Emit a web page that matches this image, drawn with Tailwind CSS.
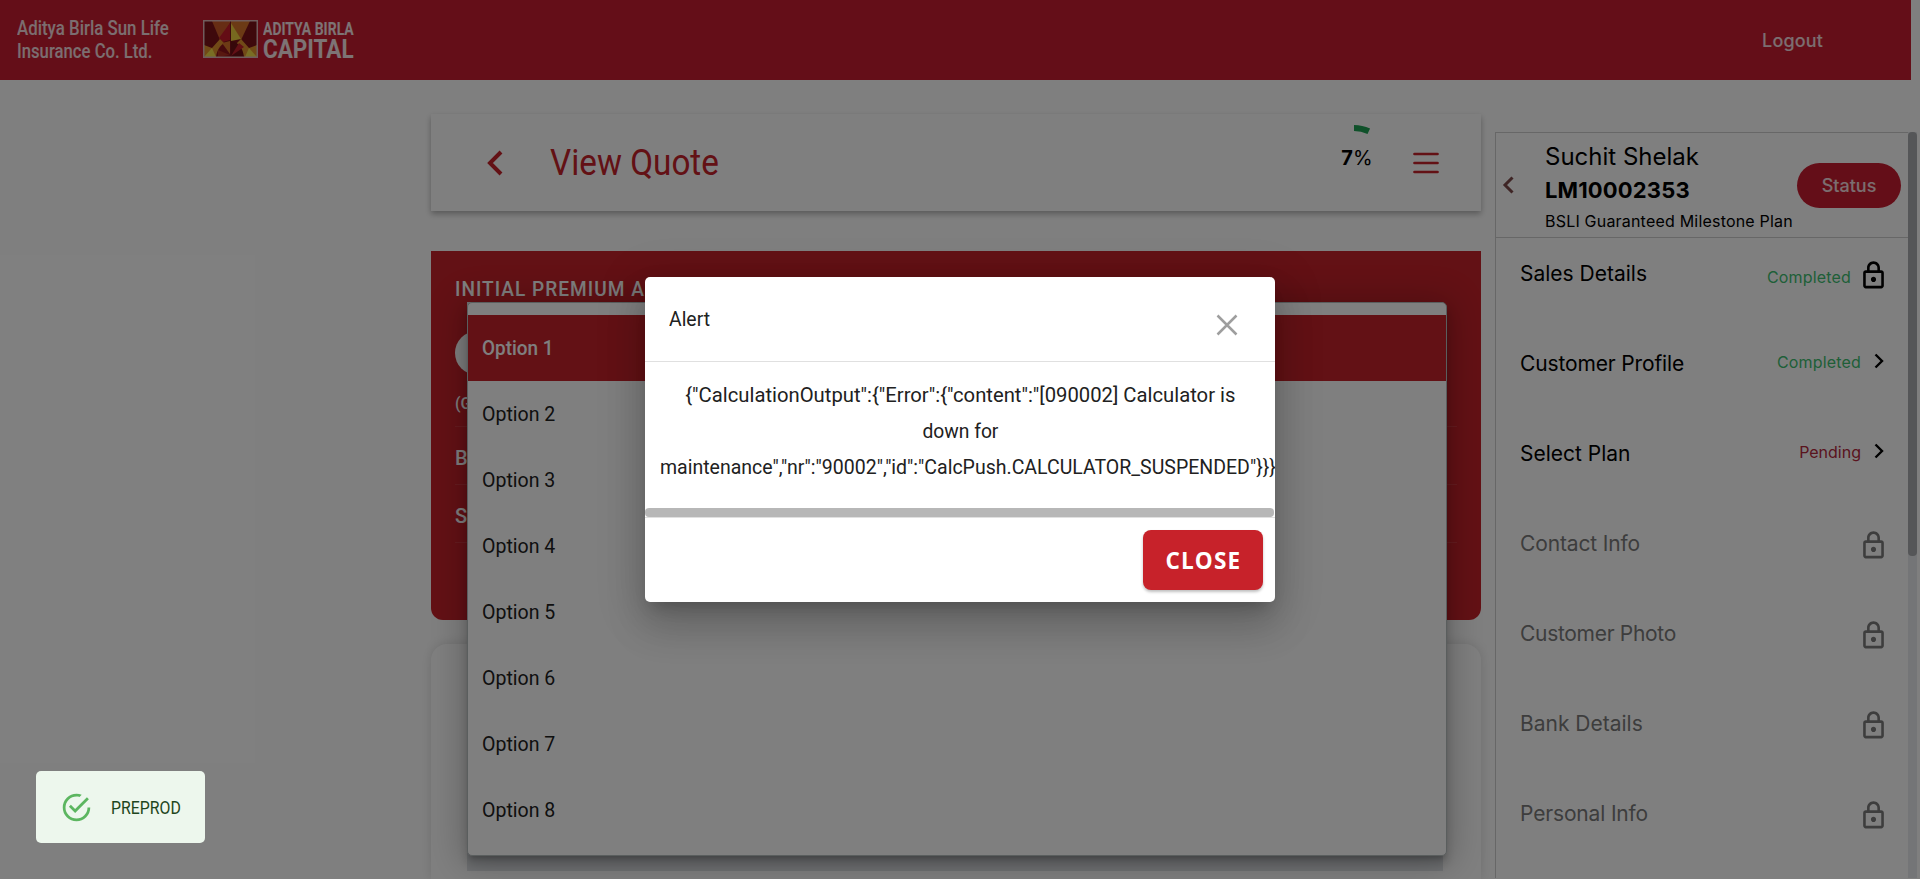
<!DOCTYPE html>
<html lang="en">
<head>
<meta charset="utf-8">
<title>View Quote</title>
<script src="https://cdn.jsdelivr.net/npm/@tailwindcss/browser@4"></script>
</head>
<body class="relative h-[879px] w-[1920px] overflow-hidden bg-white font-['Roboto',sans-serif] text-[#212121]">
<svg class="hidden">
  <symbol id="lock" viewBox="0 0 24 24"><path d="M18 8h-1V6c0-2.760-2.240-5-5-5S7 3.240 7 6v2H6c-1.100 0-2 .9-2 2v10c0 1.100.9 2 2 2h12c1.100 0 2-.9 2-2V10c0-1.100-.9-2-2-2zM9 6c0-1.660 1.340-3 3-3s3 1.340 3 3v2H9V6zm9 14H6V10h12v10zm-6-3c1.100 0 2-.9 2-2s-.9-2-2-2-2 .9-2 2 .9 2 2 2z"/></symbol>
  <symbol id="next" viewBox="0 0 10 16"><path d="M1.500 1.500L8 8l-6.500 6.500" fill="none" stroke="#000" stroke-width="2.400"/></symbol>
</svg>

<header class="flex h-20 w-[1911px] items-center bg-[#c91c30] text-white">
  <div class="ml-[17px] w-[186px] text-[20px] leading-[23.5px] font-medium text-white/85">
    <div class="w-[151px]"><div class="origin-left scale-x-[.843] whitespace-nowrap">Aditya Birla Sun Life</div></div>
    <div class="w-[134px]"><div class="origin-left scale-x-[.835] whitespace-nowrap">Insurance Co. Ltd.</div></div>
  </div>
  <svg class="mb-[2px] h-[38px] w-[55px]" viewBox="0 0 55 38">
    <rect width="55" height="38" fill="#7d1218"/>
    <path d="M9 1h18v2L17 20z" fill="#cf5a28"/><path d="M28 1h19L38 20 28 4z" fill="#d8742a"/>
    <path d="M27 3v17l-7 2-4-4z" fill="#c91a2b"/><path d="M28 3l10 16-10 2z" fill="#efd23e"/>
    <path d="M1 25l8 3 8-9 4 4-7 14H1z" fill="#e2952f"/><path d="M54 25l-8 3-8-9-4 4 7 14h13z" fill="#e2952f"/>
    <path d="M1 37l8-9 4 9zM54 37l-8-9-4 9z" fill="#f2dc48"/>
    <path d="M13 37c1-8 5-14 14-16v16z" fill="#8d141b"/><path d="M28 37V21c7 1 12 7 13 16z" fill="#6d1015"/>
    <path d="M28 36l13-9-5-4z" fill="#c5202a"/><path d="M19 23l8-2v13z" fill="#d9752a"/><path d="M15 30l12 5-12 2z" fill="#b03020"/>
    <rect x=".75" y=".75" width="53.500" height="36.500" fill="none" stroke="#e0b8b8" stroke-width="1.500"/>
  </svg>
  <div class="ml-[5px] w-[91px] whitespace-nowrap pt-px font-bold text-white/90">
    <div class="h-[17px] origin-left scale-x-[.735] text-[19px] leading-[17px]">ADITYA BIRLA</div>
    <div class="h-[24px] origin-left scale-x-[.865] text-[26px] leading-[25px]">CAPITAL</div>
  </div>
  <a class="mr-[88px] ml-auto pt-px font-['Inter',sans-serif] text-[18px] font-medium tracking-[.15px] text-white/85">Logout</a>
</header>

<main class="flex h-[799px] pl-[431px]">
  <section class="w-[1050px] shrink-0 pt-[34px]">
    <div class="flex h-[97px] items-center bg-white shadow-[0_3px_6px_rgba(0,0,0,.3)]">
      <svg class="ml-[56px] h-[26px] w-[16px]" viewBox="0 0 16 26"><path d="M14 2L3 13l11 11" fill="none" stroke="#c7222a" stroke-width="4"/></svg>
      <h1 class="ml-[47px] grow origin-left scale-x-[.924] whitespace-nowrap text-[36px] leading-[36px] text-[#c7222a]">View Quote</h1>
      <div class="relative mr-[6px] flex h-[76px] w-[76px] items-center justify-center font-['Inter',sans-serif] text-[20px]">
        <svg class="absolute inset-0" viewBox="0 0 76 76"><path d="M37 3a35 35 0 0 1 14.800 3.280" fill="none" stroke="#1fa354" stroke-width="6"/></svg>
        <span class="pb-[10px] pl-[4px] text-black"><b class="font-bold">7</b>%</span>
      </div>
      <svg class="mr-[42px] ml-[14px] h-[22px] w-[26px]" viewBox="0 0 26 22"><path d="M1.500 2h23M1.500 11h23M1.500 20h23" stroke="#c7222a" stroke-width="2.700" stroke-linecap="round"/></svg>
    </div>

    <div class="mt-[40px] h-[369px] rounded-b-[12px] bg-[#c7222a] px-6 pt-[26px] text-white">
      <div class="h-6 origin-left scale-x-[.93] whitespace-nowrap text-[20.5px] leading-6 font-medium tracking-[1.1px]">INITIAL PREMIUM AMOUNT</div>
      <div class="mt-[30px] h-[44px] w-[180px] rounded-full bg-white"></div>
      <div class="h-[52px] border-b border-white/10 pt-[16px] text-[16px] leading-[25px] font-medium">(GST)</div>
      <div class="h-[58px] border-b border-white/10 text-[20px] leading-[62px] font-medium">Base</div>
      <div class="h-[58px] border-b border-white/10 text-[20px] leading-[62px] font-medium">Sum</div>
    </div>
    <div class="mt-[24px] h-[235px] rounded-t-[16px] bg-white shadow-[0_0_12px_rgba(0,0,0,.13)]"></div>
  </section>

  <aside class="mt-[52px] ml-[14px] flex h-[746px] w-[422px] shrink-0 border-t border-l border-[#cfcfcf] bg-white font-['Inter',sans-serif] text-black">
    <div class="w-[412px]">
      <div class="flex h-[105px] items-center border-b border-[#cfcfcf]">
        <svg class="ml-[6px] h-[18px] w-[12px]" viewBox="0 0 12 18"><path d="M10.500 1.500L3 9l7.500 7.500" fill="none" stroke="#7d4a4a" stroke-width="3"/></svg>
        <div class="mt-[5px] ml-[31px] w-[252px] whitespace-nowrap">
          <div class="h-[34px] text-[24px] leading-[34px]">Suchit Shelak</div>
          <div class="h-[32px] text-[22px] leading-[33px] font-bold tracking-[.15px]">LM10002353</div>
          <div class="h-[29px] text-[16px] leading-[30px] tracking-[.2px]">BSLI Guaranteed Milestone Plan</div>
        </div>
        <div class="flex h-[45px] w-[104px] items-center justify-center rounded-full bg-[#c91c30] text-[18px] font-medium text-white/85">Status</div>
      </div>
      <ul class="flex flex-col gap-[18px] pr-[19px] pl-[24px] text-[21px]">
        <li class="flex h-[72px] items-center"><span class="grow">Sales Details</span><span class="mt-[6px] mr-[7px] text-[16px] tracking-[.17px] text-[#40bf70]">Completed</span><svg class="mt-[2px] h-[31px] w-[31px]"><use href="#lock"/></svg></li>
        <li class="flex h-[72px] items-center"><span class="grow tracking-[-.14px]">Customer Profile</span><span class="mb-[5px] mr-[13px] text-[16px] tracking-[.17px] text-[#40bf70]">Completed</span><svg class="mr-[5px] mb-[6px] h-[16px] w-[10px]"><use href="#next"/></svg></li>
        <li class="flex h-[72px] items-center"><span class="grow">Select Plan</span><span class="mb-[5px] mr-[13px] text-[16px] text-[#b5283c]">Pending</span><svg class="mr-[5px] mb-[6px] h-[16px] w-[10px]"><use href="#next"/></svg></li>
        <li class="flex h-[72px] items-center fill-[#7a7a7a] text-[#7a7a7a]"><span class="grow tracking-[-.14px]">Contact Info</span><svg class="mt-[3px] h-[31px] w-[31px]"><use href="#lock"/></svg></li>
        <li class="flex h-[72px] items-center fill-[#7a7a7a] text-[#7a7a7a]"><span class="grow tracking-[-.3px]">Customer Photo</span><svg class="mt-[3px] h-[31px] w-[31px]"><use href="#lock"/></svg></li>
        <li class="flex h-[72px] items-center fill-[#7a7a7a] text-[#7a7a7a]"><span class="grow">Bank Details</span><svg class="mt-[3px] h-[31px] w-[31px]"><use href="#lock"/></svg></li>
        <li class="flex h-[72px] items-center fill-[#7a7a7a] text-[#7a7a7a]"><span class="grow tracking-[-.16px]">Personal Info</span><svg class="mt-[3px] h-[31px] w-[31px]"><use href="#lock"/></svg></li>
      </ul>
    </div>
    <div class="-mt-px w-[9px] bg-[#e8eaee]"><div class="h-[424px] rounded-[4px] bg-[#abadb0]"></div></div>
  </aside>
</main>

<!-- option menu -->
<div class="absolute top-[302px] left-[467px] h-[569px] w-[976px] bg-[#e2e5e9]"></div>
<div class="absolute top-[302px] left-[467px] h-[554px] w-[980px] rounded-[5px] border border-[#b5bcbc] bg-white pt-[12px] text-[21px] shadow-[0_5px_5px_-3px_rgba(0,0,0,.2),0_8px_10px_1px_rgba(0,0,0,.14),0_3px_34px_6px_rgba(0,0,0,.22)]">
  <div class="flex h-[66px] items-center bg-[#c7222a] pt-px pl-[14px] font-medium text-white"><span class="origin-left scale-x-[.9]">Option 1</span></div>
  <div class="flex h-[66px] items-center pt-px pl-[14px]"><span class="origin-left scale-x-[.93]">Option 2</span></div>
  <div class="flex h-[66px] items-center pt-px pl-[14px]"><span class="origin-left scale-x-[.93]">Option 3</span></div>
  <div class="flex h-[66px] items-center pt-px pl-[14px]"><span class="origin-left scale-x-[.93]">Option 4</span></div>
  <div class="flex h-[66px] items-center pt-px pl-[14px]"><span class="origin-left scale-x-[.93]">Option 5</span></div>
  <div class="flex h-[66px] items-center pt-px pl-[14px]"><span class="origin-left scale-x-[.93]">Option 6</span></div>
  <div class="flex h-[66px] items-center pt-px pl-[14px]"><span class="origin-left scale-x-[.93]">Option 7</span></div>
  <div class="flex h-[66px] items-center pt-px pl-[14px]"><span class="origin-left scale-x-[.93]">Option 8</span></div>
</div>

<div class="absolute inset-0 bg-black/50"></div>

<!-- alert dialog -->
<div class="absolute top-[277px] left-[645px] flex h-[325px] w-[630px] flex-col rounded-[5px] bg-white text-[21px] shadow-[0_11px_15px_-7px_rgba(0,0,0,.2),0_24px_38px_3px_rgba(0,0,0,.14),0_9px_46px_8px_rgba(0,0,0,.12)]">
  <div class="flex h-[85px] items-center justify-between border-b border-[#e0e0e0] pr-[37px] pl-[24px]">
    <span class="origin-left scale-x-[.923] pt-px">Alert</span>
    <svg class="mt-[12px] h-[22px] w-[22px]" viewBox="0 0 22 22"><path d="M1.500 1.500l19 19M20.500 1.500l-19 19" stroke="#9e9e9e" stroke-width="2.500"/></svg>
  </div>
  <div class="flex h-[146px] flex-col items-center overflow-hidden pt-[15px] leading-[36px] whitespace-nowrap">
    <div class="scale-x-[.964]">{"CalculationOutput":{"Error":{"content":"[090002] Calculator is</div>
    <div class="scale-x-[.918]">down for</div>
    <div class="ml-[15px] origin-left self-start scale-x-[.929]">maintenance","nr":"90002","id":"CalcPush.CALCULATOR_SUSPENDED"}}}</div>
  </div>
  <div class="h-[9px] w-[629px] rounded-[4px] bg-[#b7b7b7]"></div>
  <div class="flex grow items-center justify-end border-t border-[#e0e0e0] pr-[12px]">
    <button class="h-[60px] w-[120px] rounded-[8px] bg-[#c7222a] font-['Open_Sans',sans-serif] text-[24px] font-bold text-white shadow-[0_2px_3px_rgba(0,0,0,.25)]"><span class="inline-block scale-x-[.94] tracking-[1.2px]">CLOSE</span></button>
  </div>
</div>

<!-- environment toast -->
<div class="absolute top-[771px] left-[36px] flex h-[72px] w-[169px] items-center rounded-[5px] bg-[#edf7ed] text-[18px] font-normal text-[#1e4620]">
  <svg class="ml-[24px] h-[33px] w-[33px]" viewBox="0 0 24 24" fill="#5cb660"><path d="M20 12a8 8 0 0 1-8 8 8 8 0 0 1-8-8 8 8 0 0 1 8-8c.76 0 1.500.11 2.200.31l1.570-1.570A9.822 9.822 0 0 0 12 2 10 10 0 0 0 2 12a10 10 0 0 0 10 10 10 10 0 0 0 10-10M7.910 10.080L6.500 11.500 11 16 21 6l-1.410-1.420L11 13.170l-3.090-3.090z"/></svg>
  <span class="ml-[18px] origin-left scale-x-[.88]">PREPROD</span>
</div>
</body>
</html>
